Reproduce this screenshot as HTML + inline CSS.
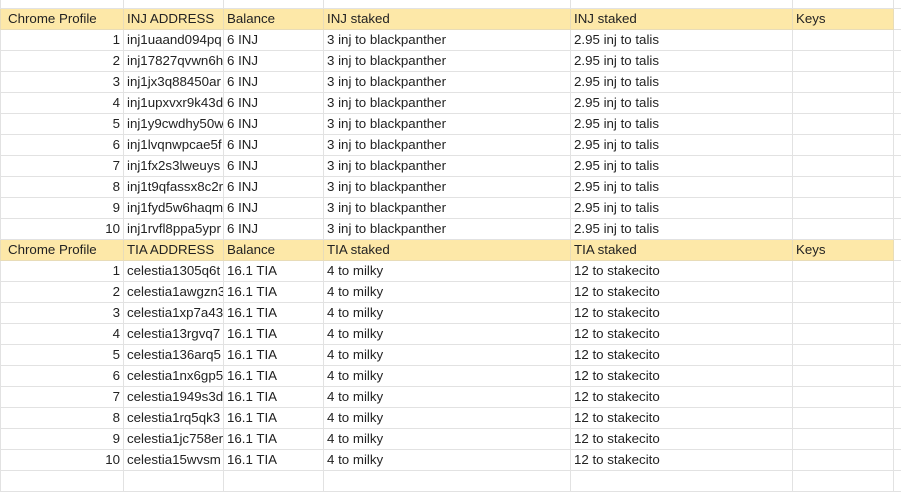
<!DOCTYPE html>
<html><head><meta charset="utf-8"><style>
body{margin:0;background:#fff;width:901px;height:474px;overflow:hidden;font-family:"Liberation Sans",Arial,sans-serif;font-size:13.3px;color:#222}
table{border-collapse:collapse;position:absolute;left:0;top:-13px;table-layout:fixed;width:913px}
td{border:1px solid #e2e2e2;height:20px;padding:0 3px;white-space:nowrap;overflow:hidden;line-height:20px}
tr.h td{background:#fde8a8;border-color:#e8dcb8}
tr.h td.e,td.e{background:#fff;border-color:#e2e2e2}
td.n{text-align:right}
td.f{padding-left:7px}
</style></head><body>
<table>
<colgroup><col style="width:123px"><col style="width:100px"><col style="width:100px"><col style="width:247px"><col style="width:222px"><col style="width:101px"><col style="width:20px"></colgroup>
<tr><td></td><td></td><td></td><td></td><td></td><td></td><td class="e"></td></tr>
<tr class="h"><td class="f">Chrome Profile</td><td>INJ ADDRESS</td><td>Balance</td><td>INJ staked</td><td>INJ staked</td><td>Keys</td><td class="e"></td></tr>
<tr><td class="n">1</td><td>inj1uaand094pq</td><td>6 INJ</td><td>3 inj to blackpanther</td><td>2.95 inj to talis</td><td></td><td></td></tr>
<tr><td class="n">2</td><td>inj17827qvwn6h</td><td>6 INJ</td><td>3 inj to blackpanther</td><td>2.95 inj to talis</td><td></td><td></td></tr>
<tr><td class="n">3</td><td>inj1jx3q88450ar</td><td>6 INJ</td><td>3 inj to blackpanther</td><td>2.95 inj to talis</td><td></td><td></td></tr>
<tr><td class="n">4</td><td>inj1upxvxr9k43d</td><td>6 INJ</td><td>3 inj to blackpanther</td><td>2.95 inj to talis</td><td></td><td></td></tr>
<tr><td class="n">5</td><td>inj1y9cwdhy50w</td><td>6 INJ</td><td>3 inj to blackpanther</td><td>2.95 inj to talis</td><td></td><td></td></tr>
<tr><td class="n">6</td><td>inj1lvqnwpcae5f</td><td>6 INJ</td><td>3 inj to blackpanther</td><td>2.95 inj to talis</td><td></td><td></td></tr>
<tr><td class="n">7</td><td>inj1fx2s3lweuys</td><td>6 INJ</td><td>3 inj to blackpanther</td><td>2.95 inj to talis</td><td></td><td></td></tr>
<tr><td class="n">8</td><td>inj1t9qfassx8c2r</td><td>6 INJ</td><td>3 inj to blackpanther</td><td>2.95 inj to talis</td><td></td><td></td></tr>
<tr><td class="n">9</td><td>inj1fyd5w6haqm</td><td>6 INJ</td><td>3 inj to blackpanther</td><td>2.95 inj to talis</td><td></td><td></td></tr>
<tr><td class="n">10</td><td>inj1rvfl8ppa5ypr</td><td>6 INJ</td><td>3 inj to blackpanther</td><td>2.95 inj to talis</td><td></td><td></td></tr>
<tr class="h"><td class="f">Chrome Profile</td><td>TIA ADDRESS</td><td>Balance</td><td>TIA staked</td><td>TIA staked</td><td>Keys</td><td class="e"></td></tr>
<tr><td class="n">1</td><td>celestia1305q6t</td><td>16.1 TIA</td><td>4 to milky</td><td>12 to stakecito</td><td></td><td></td></tr>
<tr><td class="n">2</td><td>celestia1awgzn3</td><td>16.1 TIA</td><td>4 to milky</td><td>12 to stakecito</td><td></td><td></td></tr>
<tr><td class="n">3</td><td>celestia1xp7a43</td><td>16.1 TIA</td><td>4 to milky</td><td>12 to stakecito</td><td></td><td></td></tr>
<tr><td class="n">4</td><td>celestia13rgvq7</td><td>16.1 TIA</td><td>4 to milky</td><td>12 to stakecito</td><td></td><td></td></tr>
<tr><td class="n">5</td><td>celestia136arq5</td><td>16.1 TIA</td><td>4 to milky</td><td>12 to stakecito</td><td></td><td></td></tr>
<tr><td class="n">6</td><td>celestia1nx6gp5</td><td>16.1 TIA</td><td>4 to milky</td><td>12 to stakecito</td><td></td><td></td></tr>
<tr><td class="n">7</td><td>celestia1949s3d</td><td>16.1 TIA</td><td>4 to milky</td><td>12 to stakecito</td><td></td><td></td></tr>
<tr><td class="n">8</td><td>celestia1rq5qk3</td><td>16.1 TIA</td><td>4 to milky</td><td>12 to stakecito</td><td></td><td></td></tr>
<tr><td class="n">9</td><td>celestia1jc758er</td><td>16.1 TIA</td><td>4 to milky</td><td>12 to stakecito</td><td></td><td></td></tr>
<tr><td class="n">10</td><td>celestia15wvsm</td><td>16.1 TIA</td><td>4 to milky</td><td>12 to stakecito</td><td></td><td></td></tr>
<tr><td></td><td></td><td></td><td></td><td></td><td></td><td></td></tr>
</table>
</body></html>
